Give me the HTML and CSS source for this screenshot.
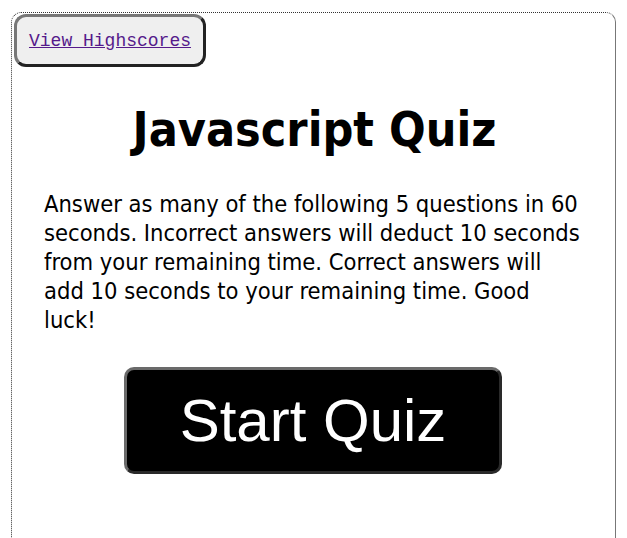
FILE: index.html
```html
<!DOCTYPE html>
<html>
<head>
<meta charset="utf-8">
<link rel="stylesheet" href="styles.css">
</head>
<body>
<div class="quiz">
  <button class="hs-btn"><a href="#" class="hs-link">View Highscores</a></button>
  <h1 class="title">Javascript Quiz</h1>
  <p class="intro">Answer as many of the following 5 questions in 60 seconds. Incorrect answers will deduct 10 seconds from your remaining time. Correct answers will add 10 seconds to your remaining time. Good luck!</p>
  <div class="start-row"><button class="start-btn">Start Quiz</button></div>
</div>
</body>
</html>
```
FILE: styles.css
```css
html, body { margin: 0; padding: 0; background: #fff; }
html { overflow: hidden; }
body { padding: 12px 0 0 11px; }
.quiz {
  width: 601px;
  height: 540px;
  box-sizing: content-box;
  border: 1px solid #777;
  border-style: dotted solid solid dotted;
  border-color: #333 #777 #777 #333;
  border-radius: 10px;
  padding: 1px 0 0 2px;
  font-family: "DejaVu Sans Condensed", "DejaVu Sans", Verdana, sans-serif;
}
.hs-btn {
  display: block;
  margin: 0;
  width: 192px;
  height: 53px;
  background: #efefef;
  border: 3px solid;
  border-color: #777 #222 #222 #777;
  border-radius: 12px;
  padding: 0;
  text-align: center;
}
.hs-link {
  font-family: "Liberation Mono", monospace;
  font-size: 18px;
  color: #551a8b;
  text-decoration: underline;
}
.title {
  margin: 32px 0 0 0;
  text-align: center;
  font-size: 48px;
  line-height: 60px;
  font-weight: bold;
  color: #000;
}
.intro {
  margin: 31px 32px 0 30px;
  font-size: 23.5px;
  line-height: 29px;
  color: #000;
}
.start-row { display: flex; justify-content: center; margin: 32px 3px 0 0; }
.start-btn {
  width: 378px;
  height: 107px;
  background: #000;
  color: #fff;
  border: 3px solid;
  border-color: #6a6a6a #2a2a2a #2a2a2a #6a6a6a;
  border-radius: 10px;
  font-family: "Liberation Sans", Arial, sans-serif;
  font-size: 60px;
  padding: 0;
}
```
